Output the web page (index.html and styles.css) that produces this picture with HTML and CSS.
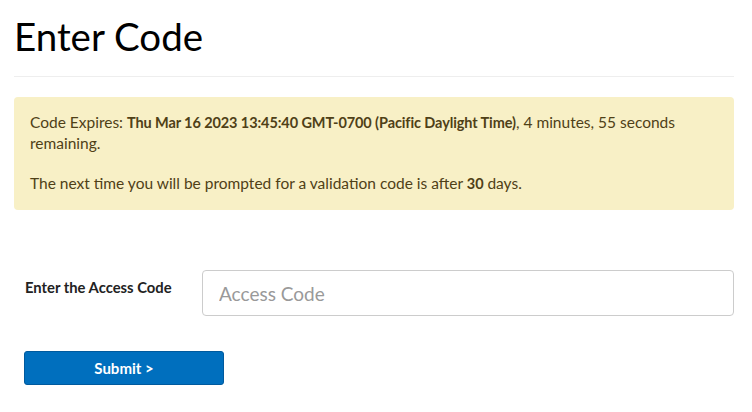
FILE: index.html
```html
<!DOCTYPE html>
<html lang="en">
<head>
    <meta charset="UTF-8">
    <meta name="viewport" content="width=device-width, initial-scale=1.0">
    <title>Enter Code</title>
    <link rel="stylesheet" href="styles.css">
</head>
<body>
    <div class="page">
        <h1>Enter Code</h1>
        <hr>

        <div class="alert">
            <p>Code Expires: <b>Thu Mar 16 2023 13:45:40 GMT-0700 (Pacific Daylight Time)</b>, 4 minutes, 55 seconds remaining.</p>
            <p>The next time you will be prompted for a validation code is after <b>30</b> days.</p>
        </div>

        <form class="code-form" onsubmit="return false">
            <div class="form-row">
                <label for="access-code">Enter the Access Code</label>
                <input type="text" id="access-code" placeholder="Access Code">
            </div>
            <button type="submit">Submit &gt;</button>
        </form>
    </div>
</body>
</html>
```

FILE: styles.css
```css
body{
    font-family: Lato, "Open Sans", Arial, sans-serif;
    font-size: 15.5px;
    line-height: 20px;
    color: #222;
    margin: 0;
    background: #fff;
}

.page{
    width: 720px;
    padding: 0 18px 0 14px;
}

h1{
    font-size: 38.5px;
    font-weight: 400;
    line-height: 40px;
    margin: 16px 0 0;
    color: #000;
}

hr{
    border: 0;
    border-top: 1px solid #eee;
    margin: 20px 0 20px;
}

.alert{
    background: #f8f0c6;
    color: #4f4017;
    border-radius: 4px;
    padding: 15px 16px 16px;
}

.alert p{
    margin: 0 0 20px;
}

.alert p:last-child{
    margin-bottom: 0;
}

.alert b{
    font-size: 14.5px;
    font-weight: 700;
    letter-spacing: -0.1px;
}

.code-form{
    margin-top: 60px;
}

.form-row{
    display: grid;
    grid-template-columns: 188px 1fr;
}

.form-row label{
    font-size: 14.8px;
    font-weight: 700;
    color: #222;
    padding: 7px 0 0 11px;
}

.form-row input{
    height: 46px;
    box-sizing: border-box;
    border: 1px solid #ccc;
    border-radius: 4px;
    padding: 0 16px;
    font-family: inherit;
    font-size: 19px;
    color: #333;
}

.form-row input::placeholder{
    color: #999;
}

.code-form button{
    margin: 35px 0 0 10px;
    width: 200px;
    height: 34px;
    background: #006fbe;
    color: #fff;
    border: 1px solid #005a9e;
    border-radius: 3px;
    font-family: inherit;
    font-size: 15px;
    font-weight: 700;
}
```
